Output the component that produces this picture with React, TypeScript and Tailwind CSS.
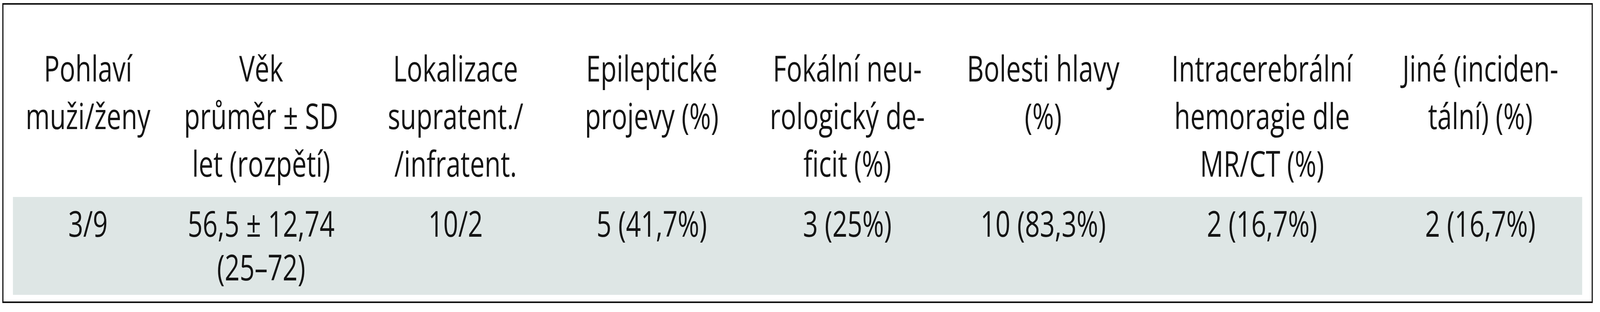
import React, { useEffect, useState } from "react";

const DESIGN_WIDTH = 5563;

const headers: string[][] = [
  ["Pohlaví", "muži/ženy"],
  ["Věk", "průměr ± SD", "let (rozpětí)"],
  ["Lokalizace", "supratent./", "/infratent."],
  ["Epileptické", "projevy (%)"],
  ["Fokální neu-", "rologický de-", "ficit (%)"],
  ["Bolesti hlavy", "(%)"],
  ["Intracerebrální", "hemoragie dle", "MR/CT (%)"],
  ["Jiné (inciden-", "tální) (%)"],
];

const values: string[][] = [
  ["3/9"],
  ["56,5 ± 12,74", "(25–72)"],
  ["10/2"],
  ["5 (41,7%)"],
  ["3 (25%)"],
  ["10 (83,3%)"],
  ["2 (16,7%)"],
  ["2 (16,7%)"],
];

function Lines({ lines }: { lines: string[] }) {
  return (
    <>
      {lines.map((l, i) => (
        <div key={i} className="whitespace-nowrap">
          {l}
        </div>
      ))}
    </>
  );
}

function fitScale() {
  if (typeof window === "undefined") return 1;
  return Math.min(1, window.innerWidth / DESIGN_WIDTH);
}

export default function App() {
  const [scale, setScale] = useState<number>(fitScale());

  useEffect(() => {
    const onResize = () => setScale(fitScale());
    window.addEventListener("resize", onResize);
    return () => window.removeEventListener("resize", onResize);
  }, []);

  return (
    <div className="w-screen h-[800px] overflow-hidden bg-white">
      <div
        className="w-[5563px] h-[800px] origin-top-left pt-2 pl-2"
        style={{ transform: `scaleX(${scale})` }}
      >
        <div
          className="w-[5530px] border-4 border-[#111111] bg-white pt-[101px] px-[33px] pb-[17px] text-[#141414] text-[91px]"
          style={{ fontFamily: '"Open Sans", "Noto Sans", sans-serif' }}
        >
          <div className="grid grid-cols-[522px_682px_670px_694px_666px_696px_826px_692px] pb-[26px] leading-[122px]">
            {headers.map((h, i) => (
              <div key={i} className="text-center">
                <Lines lines={h} />
              </div>
            ))}
          </div>
          <div className="grid grid-cols-[522px_682px_670px_694px_666px_696px_826px_692px] bg-[#dee6e5] pt-[11px] pb-[12px] leading-[112px] h-[251px]">
            {values.map((v, i) => (
              <div key={i} className="text-center">
                <Lines lines={v} />
              </div>
            ))}
          </div>
        </div>
      </div>
    </div>
  );
}
